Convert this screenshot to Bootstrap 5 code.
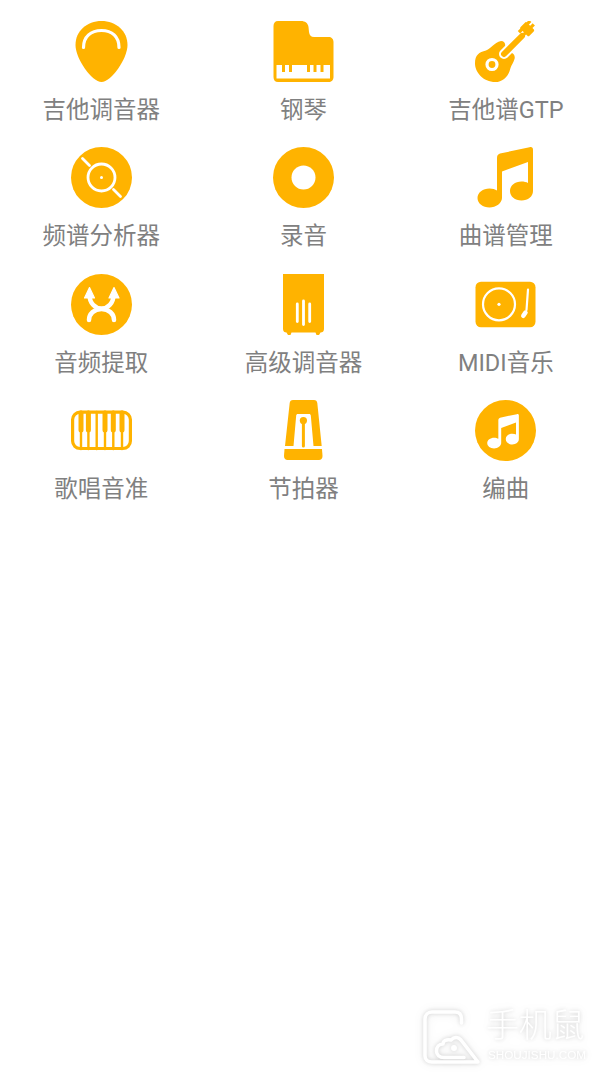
<!DOCTYPE html>
<html lang="zh-CN">
<head>
<meta charset="utf-8">
<title>工具</title>
<link href="https://cdn.jsdelivr.net/npm/bootstrap@5.3.0/dist/css/bootstrap.min.css" rel="stylesheet">
<style>
html,body{height:100%;background:#fff;overflow:hidden}
body{font-family:Roboto,"Noto Sans CJK SC",sans-serif}
.tool-grid{padding-top:21px}
.tool-tile{height:126.33px}
.tool-ico{width:61px;height:61px;display:block;fill:#ffb300}
.tool-ico .wl{fill:none;stroke:#fff;stroke-linecap:round;stroke-linejoin:round}
.tool-ico .wf{fill:#fff}
.tool-ico .ol{fill:none;stroke:#ffb300;stroke-linecap:round;stroke-linejoin:round}
.tool-name{margin-top:15px;font-size:23.5px;line-height:27px;color:#808080;white-space:nowrap}
.wm-box{position:absolute;left:420px;top:1006px;width:170px;height:62px;color:#fff;filter:drop-shadow(0 0 2px rgba(0,0,0,.16)) drop-shadow(0 0 5px rgba(0,0,0,.07))}
.wm-ico{position:absolute;left:0;top:0;width:62px;height:62px}
.wm-big{position:absolute;left:66px;top:0;font-size:33px;line-height:40px;font-weight:300;letter-spacing:-.3px;white-space:nowrap}
.wm-small{position:absolute;left:68px;top:42px;font-size:11.7px;line-height:14px;white-space:nowrap;font-family:"Liberation Sans",sans-serif}
</style>
</head>
<body class="position-relative">
<svg width="0" height="0" class="position-absolute">
<defs>
<path id="note" d="M22 11 C22 8.500 23 7.300 25 6.500 L54.500 .3 C56.800 -.4 58 .8 58 2.800 V44 C58 49.500 53 53.500 46.500 53.500 C40 53.500 35 49.500 35 44 C35 38.500 40 34.500 46.500 34.500 C49 34.500 51.300 35 53 36 V15 L27 24.500 V51 C27 56 21 60.500 14.500 60.500 C8 60.500 2.500 56.500 2.500 51 C2.500 45.500 8 41.500 14.500 41.500 C17.500 41.500 20 42.300 22 43.500Z"/>
</defs>
</svg>
<main class="tool-grid container-fluid px-0">
<div class="row g-0">

<div class="col-4 tool-tile d-flex flex-column align-items-center">
<svg class="tool-ico" viewBox="0 0 61 61"><path d="M30.500 0 C45 0 56.500 10 56.500 24 C56.500 38 40 61 30.500 61 C21 61 4.500 38 4.500 24 C4.500 10 16 0 30.500 0Z"/><path class="wl" stroke-width="3.200" d="M12.500 26.500 C12.500 15.500 20 9.500 30.500 9.500 C41 9.500 48 15.500 48 26.500"/></svg>
<div class="tool-name">吉他调音器</div>
</div>

<div class="col-4 tool-tile d-flex flex-column align-items-center">
<svg class="tool-ico" viewBox="0 0 61 61"><path d="M5 0 H28 C32 0 35 2 35.500 6 L36 11 C36.500 14.500 38 16 41 16 H55.500 C58.500 16 60.500 18 60.500 21 V56 C60.500 59 58.500 61 55.500 61 H5 C2 61 .5 59 .5 56 V5 C.5 2 2 0 5 0Z"/><rect class="wf" x="3.500" y="44" width="53.500" height="13.500"/><g><rect x="9" y="44" width="3" height="7"/><rect x="16" y="44" width="3" height="7"/><rect x="34" y="44" width="3" height="7"/><rect x="40.500" y="44" width="3" height="7"/><rect x="47.500" y="44" width="3" height="7"/></g></svg>
<div class="tool-name">钢琴</div>
</div>

<div class="col-4 tool-tile d-flex flex-column align-items-center">
<svg class="tool-ico" viewBox="0 0 61 61"><path d="M26 20 C29.500 20 31 23 30 27 L35 31.500 C38.500 31.500 40.500 35 39.500 38 C38.500 42 36.500 43.500 35.500 47 C33.500 56 27 61 20.500 61 C8 61 0 51 0 42.500 C0 34 4 31 11 29.500 C15 28.500 19 21.500 26 20Z"/><path class="wl" stroke-width="10" d="M29 33 L38 24"/><path class="ol" stroke-width="6" d="M29 33 L47 15"/><g transform="rotate(45 52 8)"><rect x="46" y="3.500" width="12.500" height="9" rx="1.500"/><rect x="47" y="0" width="3.200" height="16"/><rect x="52" y="0" width="3.200" height="16"/></g><circle class="wl" stroke-width="3.200" cx="17" cy="43.500" r="5"/></svg>
<div class="tool-name">吉他谱GTP</div>
</div>

<div class="col-4 tool-tile d-flex flex-column align-items-center">
<svg class="tool-ico" viewBox="0 0 61 61"><circle cx="30.500" cy="30.500" r="30.500"/><circle class="wl" stroke-width="2.800" cx="30.500" cy="30.500" r="13.500"/><circle class="wf" cx="30.500" cy="30.500" r="1.500"/><path class="wl" stroke-width="2.800" d="M11.500 11.500 L18.500 18.500 M42.500 42.500 L49.500 49.500"/></svg>
<div class="tool-name">频谱分析器</div>
</div>

<div class="col-4 tool-tile d-flex flex-column align-items-center">
<svg class="tool-ico" viewBox="0 0 61 61"><circle cx="30.500" cy="30.500" r="30.500"/><circle class="wf" cx="30.500" cy="30.500" r="12"/></svg>
<div class="tool-name">录音</div>
</div>

<div class="col-4 tool-tile d-flex flex-column align-items-center">
<svg class="tool-ico" viewBox="0 0 61 61"><use href="#note"/></svg>
<div class="tool-name">曲谱管理</div>
</div>

<div class="col-4 tool-tile d-flex flex-column align-items-center">
<svg class="tool-ico" viewBox="0 0 61 61"><circle cx="30.500" cy="30.500" r="30.500"/><path class="wl" stroke-width="4.500" d="M18.500 21 C18.500 29 24 34.500 30.500 34.500 C37 34.500 42.500 29 42.500 21 M18 46 C18 40 23 35 30.500 35 C38 35 43 40 43 46"/><path class="wf" stroke="#fff" stroke-width="1.200" stroke-linejoin="round" d="M18.500 13.500 L23.500 24 H13.500Z M43 13.500 L48 24 H38Z"/></svg>
<div class="tool-name">音频提取</div>
</div>

<div class="col-4 tool-tile d-flex flex-column align-items-center">
<svg class="tool-ico" viewBox="0 0 61 61"><path d="M10 0 H51 V55 C51 57.500 49.500 58.500 47.500 58.500 L46 61 H43.500 L42.500 58.500 H18.500 L17.500 61 H15 L13.500 58.500 C11.500 58.500 10 57.500 10 55Z"/><path class="wl" stroke-width="2.800" d="M24.300 30 V47.500 M30.500 27 V50.500 M36.700 30 V47.500"/></svg>
<div class="tool-name">高级调音器</div>
</div>

<div class="col-4 tool-tile d-flex flex-column align-items-center">
<svg class="tool-ico" viewBox="0 0 61 61"><rect x=".5" y="7.700" width="60" height="45.600" rx="5.500"/><circle class="wl" stroke-width="2.200" cx="24" cy="30.300" r="16"/><circle class="wf" cx="24" cy="30.300" r="1.600"/><path class="wl" stroke-width="2.200" d="M53 15.500 L51.500 36"/><path class="wl" stroke-width="4.500" d="M50.500 38.500 L48.300 41.800"/></svg>
<div class="tool-name">MIDI音乐</div>
</div>

<div class="col-4 tool-tile d-flex flex-column align-items-center">
<svg class="tool-ico" viewBox="0 0 61 61"><rect class="ol" x="1.600" y="12.100" width="57.800" height="36.400" rx="7.500" stroke-width="3.200"/><path class="ol" stroke-width="2.400" stroke-linecap="butt" d="M10 12 V49 M17.400 12 V49 M25.700 12 V49 M34 12 V49 M42.300 12 V49 M51 12 V49"/><path class="ol" stroke-width="5" d="M10 13 V30 M17.400 13 V30 M34 13 V30 M42.300 13 V30 M51 13 V30"/></svg>
<div class="tool-name">歌唱音准</div>
</div>

<div class="col-4 tool-tile d-flex flex-column align-items-center">
<svg class="tool-ico" viewBox="0 0 61 61"><path fill-rule="evenodd" d="M20 0 H41 C43 0 44 1 44.300 3 L48.700 46 H12 L16.700 3 C17 1 18 0 20 0Z M25 14 C23.800 14 23.300 14.700 23.200 15.500 L20.500 46 H40.500 L37.800 15.500 C37.700 14.700 37.200 14 36 14Z"/><circle cx="30.400" cy="20.600" r="3.600"/><path class="ol" stroke-width="3" stroke-linecap="butt" d="M30.400 21 V46"/><path d="M11.500 49 H49 L49.500 56 C49.500 58.500 48 60 46 60 H14.500 C12.500 60 11 58.500 11 56Z"/></svg>
<div class="tool-name">节拍器</div>
</div>

<div class="col-4 tool-tile d-flex flex-column align-items-center">
<svg class="tool-ico" viewBox="0 0 61 61"><circle cx="30.500" cy="30.500" r="30.500"/><g transform="translate(10.800 14) scale(.57)" class="wf"><use href="#note" fill="#fff"/></g></svg>
<div class="tool-name">编曲</div>
</div>

</div>
</main>
<div class="wm-box">
<svg class="wm-ico" viewBox="0 0 62 62" fill="none" stroke="#fff" stroke-width="3.500" stroke-linecap="round" stroke-linejoin="round"><path d="M41.500 17 V13 C41.500 8.500 39 6 35 6 H12 C8 6 5 9 5 13 V50 C5 53.500 8 56 12 56 H58 L41 34 C38 30.500 34 31 31 34 C26 33 23 35 23 38 C19 38 16.500 41 16.500 45 C16.500 49 19.500 51.500 24 51.500 H44"/><circle cx="34" cy="42" r="1.200" fill="#fff"/></svg>
<div class="wm-big">手机鼠</div>
<div class="wm-small">SHOUJISHU.COM</div>
</div>
<script src="https://cdn.jsdelivr.net/npm/bootstrap@5.3.0/dist/js/bootstrap.bundle.min.js"></script>
</body>
</html>
